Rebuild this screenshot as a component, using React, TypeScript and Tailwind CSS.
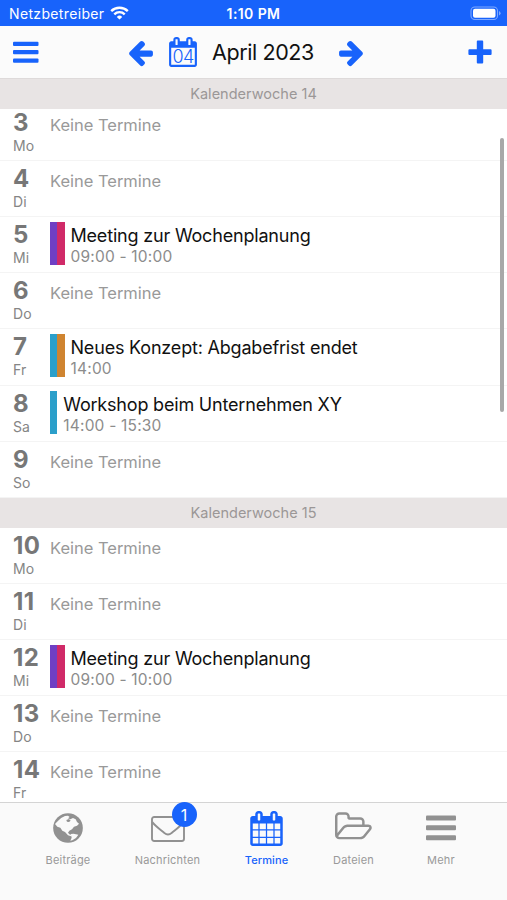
import type { ReactNode } from "react";

type Day = {
  day: number;
  name: string;
  height: string;
  title?: string;
  time?: string;
  colors?: string[];
};

const week14: Day[] = [
  { day: 3, name: "Mo", height: "h-[56px]" },
  { day: 4, name: "Di", height: "h-[56px]" },
  { day: 5, name: "Mi", height: "h-[56px]", title: "Meeting zur Wochenplanung", time: "09:00 - 10:00", colors: ["bg-[#6f3fc4]", "bg-[#d02a68]"] },
  { day: 6, name: "Do", height: "h-[56px]" },
  { day: 7, name: "Fr", height: "h-[57px]", title: "Neues Konzept: Abgabefrist endet", time: "14:00", colors: ["bg-[#2b9fca]", "bg-[#cf8430]"] },
  { day: 8, name: "Sa", height: "h-[56px]", title: "Workshop beim Unternehmen XY", time: "14:00 - 15:30", colors: ["bg-[#2b9fca]"] },
  { day: 9, name: "So", height: "h-[56px]" },
];

const week15: Day[] = [
  { day: 10, name: "Mo", height: "h-[56px]" },
  { day: 11, name: "Di", height: "h-[56px]" },
  { day: 12, name: "Mi", height: "h-[56px]", title: "Meeting zur Wochenplanung", time: "09:00 - 10:00", colors: ["bg-[#6f3fc4]", "bg-[#d02a68]"] },
  { day: 13, name: "Do", height: "h-[56px]" },
  { day: 14, name: "Fr", height: "h-[56px]" },
];

const ARROW_LEFT =
  "M1664 896v128q0 53-32.5 90.5t-84.5 37.5h-704l293 294q38 36 38 90t-38 90l-75 76q-37 37-90 37-52 0-91-37l-651-652q-37-37-37-90 0-52 37-91l651-650q38-38 91-38 52 0 90 38l75 74q38 38 38 91t-38 91l-293 293h704q52 0 84.5 37.5t32.5 90.5z";

const CALENDAR =
  "M192 1664h288v-288h-288v288zm352 0h320v-288h-320v288zm-352-352h288v-320h-288v320zm352 0h320v-320h-320v320zm-352-384h288v-288h-288v288zm736 736h320v-288h-320v288zm-384-736h320v-288h-320v288zm768 736h288v-288h-288v288zm-384-352h320v-320h-320v320zm-352-864v-288q0-13-9.5-22.5t-22.5-9.5h-64q-13 0-22.5 9.5t-9.5 22.5v288q0 13 9.5 22.5t22.5 9.5h64q13 0 22.5-9.5t9.5-22.5zm736 864h288v-320h-288v320zm-384-384h320v-288h-320v288zm384 0h288v-288h-288v288zm32-480v-288q0-13-9.5-22.5t-22.5-9.5h-64q-13 0-22.5 9.5t-9.5 22.5v288q0 13 9.5 22.5t22.5 9.5h64q13 0 22.5-9.5t9.5-22.5zm384-64v1280q0 52-38 90t-90 38h-1408q-52 0-90-38t-38-90v-1280q0-52 38-90t90-38h128v-96q0-66 47-113t113-47h64q66 0 113 47t47 113v96h384v-96q0-66 47-113t113-47h64q66 0 113 47t47 113v96h128q52 0 90 38t38 90z";

const CALENDAR_EMPTY =
  "M192 1664h1408v-1024h-1408v1024zm384-1216v-288q0-13-9.5-22.5t-22.5-9.5h-64q-13 0-22.5 9.5t-9.5 22.5v288q0 13 9.5 22.5t22.5 9.5h64q13 0 22.5-9.5t9.5-22.5zm768 0v-288q0-13-9.5-22.5t-22.5-9.5h-64q-13 0-22.5 9.5t-9.5 22.5v288q0 13 9.5 22.5t22.5 9.5h64q13 0 22.5-9.5t9.5-22.5zm384-64v1280q0 52-38 90t-90 38h-1408q-52 0-90-38t-38-90v-1280q0-52 38-90t90-38h128v-96q0-66 47-113t113-47h64q66 0 113 47t47 113v96h384v-96q0-66 47-113t113-47h64q66 0 113 47t47 113v96h128q52 0 90 38t38 90z";

const FOLDER =
  "M1781 803q0-35-53-35h-1088q-40 0-85.5 21.5t-71.5 52.5l-294 363q-18 24-18 40 0 35 53 35h1088q40 0 86-22t71-53l294-363q18-22 18-39zm-1141-163h768v-160q0-40-28-68t-68-28h-576q-40 0-68-28t-28-68v-64q0-40-28-68t-68-28h-320q-40 0-68 28t-28 68v853l256-315q44-53 116-87.5t140-34.5zm1269 163q0 62-46 120l-295 363q-43 53-116 87.5t-140 34.5h-1088q-92 0-158-66t-66-158v-960q0-92 66-158t158-66h320q92 0 158 66t66 158v32h544q92 0 158 66t66 158v160h192q54 0 99 24.5t67 70.5q15 32 15 68z";

function WeekHeader({ week }: { week: number }) {
  return (
    <div className="flex h-[30px] shrink-0 items-center justify-center bg-[#e8e4e4] text-[14.5px] tracking-[0.02px] text-[#9b9797]">
      Kalenderwoche {week}
    </div>
  );
}

function DayRow({ entry }: { entry: Day }) {
  return (
    <div className={`flex shrink-0 border-b border-[#f4f4f4] ${entry.height}`}>
      <div className="w-[50px] shrink-0 pl-[13px] pt-[6px] text-[#777]">
        <div className="text-[24px] font-bold leading-[24px] tracking-[0.3px]">{entry.day}</div>
        <div className="pt-[3px] text-[14px] leading-[16px] tracking-[0.1px] text-[#858585]">{entry.name}</div>
      </div>
      {entry.title ? (
        <>
          <div className="mt-[5px] flex h-[43px] shrink-0">
            {entry.colors?.map((c) => <div key={c} className={`w-[7.25px] ${c}`} />)}
          </div>
          <div className="whitespace-nowrap pl-[6px] pt-[8px]">
            <div className="text-[18px] leading-[22px] tracking-[-0.19px] text-[#111]">{entry.title}</div>
            <div className="text-[15.5px] leading-[20px] tracking-[0.2px] text-[#8c8c8c]">{entry.time}</div>
          </div>
        </>
      ) : (
        <div className="pt-[9px] text-[16.5px] leading-[22px] tracking-[-0.02px] text-[#999]">Keine Termine</div>
      )}
    </div>
  );
}

function Tab({ label, width, active, children }: { label: string; width: string; active?: boolean; children: ReactNode }) {
  return (
    <div className={`flex flex-col items-center ${width} ${active ? "text-[#1863fb]" : "text-[#919191]"}`}>
      <div className="flex h-[50px] items-center justify-center">{children}</div>
      <div className={`text-[11px] leading-[14px] ${active ? "font-medium tracking-[0.1px]" : "tracking-[0.2px] text-[#999]"}`}>{label}</div>
    </div>
  );
}

export default function App() {
  return (
    <div className="flex h-[900px] w-[507px] flex-col overflow-hidden bg-white font-['Inter','Liberation_Sans',sans-serif]">
      <div className="grid h-[26px] shrink-0 grid-cols-3 items-center bg-[#1863fb] text-[14px] text-white">
        <div className="flex items-center gap-[6px] pl-[9px] pt-px">
          <span className="tracking-[0.35px]">Netzbetreiber</span>
          <svg className="mb-[2px]" width="19" height="14" viewBox="0 0 19 14" fill="none" stroke="white" strokeWidth="2.4">
            <path d="M1.2 5.1a11.8 11.8 0 0 1 16.6 0" />
            <path d="M4.3 8.3a7.4 7.4 0 0 1 10.4 0" />
            <path d="M6.8 10.9a3.9 3.9 0 0 1 5.4 0L9.5 13.6z" fill="white" stroke="none" />
          </svg>
        </div>
        <div className="pt-px text-center font-semibold tracking-[0.4px]">1:10 PM</div>
        <div className="flex justify-end pr-[6px]">
          <svg width="31" height="15" viewBox="0 0 31 15" fill="none">
            <rect x="1" y="1" width="26.5" height="12.5" rx="3.8" stroke="#7fa9ff" strokeWidth="1.1" />
            <rect x="3" y="2.8" width="22.5" height="9" rx="2" fill="white" />
            <path d="M29 5v4.6q1.6-.8 1.6-2.3T29 5z" fill="#7fa9ff" />
          </svg>
        </div>
      </div>

      <header className="flex h-[52px] shrink-0 items-center bg-[#fbfbfb] text-[#1863fb]">
        <svg className="ml-[13px]" width="26" height="22" viewBox="0 0 26 22" fill="currentColor">
          <rect y="0.8" width="25.5" height="4.2" rx="1" />
          <rect y="9.1" width="25.5" height="4.2" rx="1" />
          <rect y="17.6" width="25.5" height="4.2" rx="1" />
        </svg>
        <svg className="ml-[87px]" width="29" height="29" viewBox="0 0 1792 1792" fill="currentColor">
          <path d={ARROW_LEFT} />
        </svg>
        <div className="relative ml-[13px] h-[30px] w-[30px]">
          <svg width="30" height="30" viewBox="0 0 1792 1792" fill="currentColor">
            <path d={CALENDAR_EMPTY} />
          </svg>
          <span className="absolute inset-x-0 top-[10px] text-center text-[18px] font-light leading-[20px] tracking-[-0.6px]">04</span>
        </div>
        <div className="ml-[14px] w-[104px] whitespace-nowrap text-[21.5px] tracking-[-0.4px] text-[#111]">April 2023</div>
        <svg className="ml-[20.5px]" width="29" height="29" viewBox="0 0 1792 1792" fill="currentColor">
          <path transform="translate(1792 0) scale(-1 1)" d={ARROW_LEFT} />
        </svg>
        <svg className="mb-px ml-auto mr-[15.5px]" width="24" height="24" viewBox="0 0 24 24" fill="currentColor">
          <path d="M9.7.5h4.6q.9 0 .9.9v7.8h7.4q1 0 1 1v3.7q0 1-1 1h-7.4v7.6q0 1-1 1H9.8q-1 0-1-1v-7.6H1.4q-1 0-1-1v-3.7q0-1 1-1h7.4V1.400q0-.9.9-.9z" />
        </svg>
      </header>

      <main className="relative flex h-[724px] shrink-0 flex-col overflow-hidden">
        <div className="z-10 -mb-[4px] flex shrink-0 flex-col border-t border-[#dedada]">
          <WeekHeader week={14} />
        </div>
        {week14.map((d) => <DayRow key={d.day} entry={d} />)}
        <WeekHeader week={15} />
        {week15.map((d) => <DayRow key={d.day} entry={d} />)}
        <div className="absolute right-[3px] top-[60px] h-[274px] w-[4px] rounded-full bg-[#a8a8a8]" />
      </main>

      <nav className="flex h-[98px] shrink-0 border-t-[1.5px] border-[#d4d4d4] bg-[#fafafa] pl-[24px]">
        <Tab label="Beiträge" width="w-[88px]">
          <svg width="30" height="30" viewBox="0 0 90 90" fill="#fafafa">
            <circle cx="45" cy="45" r="44.5" fill="#919191" />
            <path d="M14 25Q22 14 36 9l9-1 5 4-5 4 7 3 8-4 8 4 4 8 6 5-6 6-9 3-6 8-8 4-4 6 4 5 6 2-1 4-9-3-9-10-8-4-6-9-9-3-7-8z" />
            <path d="M40 21l8-3 5 5-5 4-6-1z" fill="#919191" />
            <path d="M53 63l9-1 14 3q-5 11-18 17l-6 1 4-9z" />
          </svg>
        </Tab>
        <Tab label="Nachrichten" width="w-[111px]">
          <div className="relative mt-[2px]">
            <svg width="34" height="26" viewBox="0 0 34 26" fill="none" stroke="currentColor" strokeWidth="1.9">
              <rect x="1" y="1" width="32" height="24" rx="2.2" />
              <path d="M1.300 6.200C5 10.800 9.500 13.800 13.400 17q3.600 2.800 7.200 0C24.500 13.800 29 10.800 32.700 6.200" />
            </svg>
            <span className="absolute -right-[12px] -top-[14px] flex size-[25px] items-center justify-center rounded-full bg-[#1863fb] text-[16px] text-white">1</span>
          </div>
        </Tab>
        <Tab label="Termine" width="w-[87px]" active>
          <svg width="35" height="35" viewBox="0 0 1792 1792" fill="currentColor"><path d={CALENDAR} /></svg>
        </Tab>
        <Tab label="Dateien" width="w-[87px]">
          <svg className="mt-[3px]" width="37" height="35" viewBox="0 0 1920 1792" fill="currentColor"><path d={FOLDER} /></svg>
        </Tab>
        <Tab label="Mehr" width="w-[88px]">
          <svg width="30" height="26" viewBox="0 0 30 26" fill="currentColor">
            <rect width="30" height="5" rx="1" y="0.5" />
            <rect width="30" height="5" rx="1" y="10.3" />
            <rect width="30" height="5" rx="1" y="20.2" />
          </svg>
        </Tab>
      </nav>
    </div>
  );
}
